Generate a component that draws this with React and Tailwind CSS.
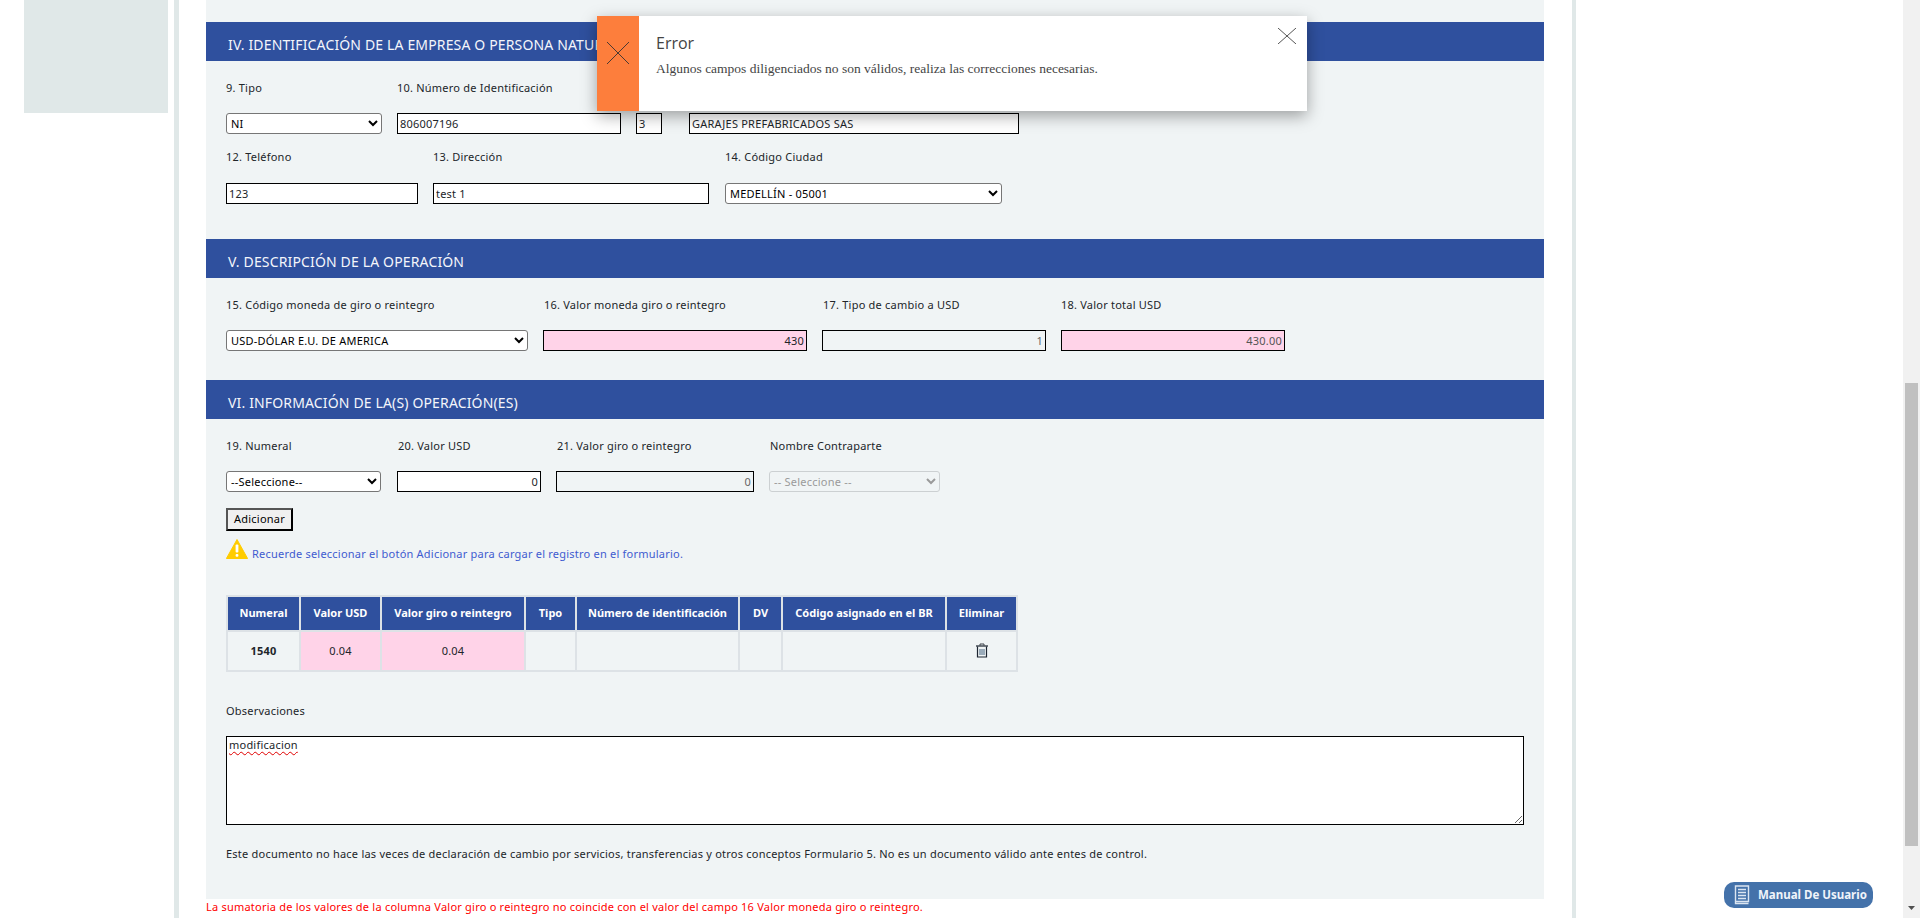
import React from "react";

const label = "text-[11px] leading-[14px] tracking-[0.22px] text-[#212529] whitespace-nowrap";
const inputBase = "h-[21px] border border-black border-solid px-[2px] pb-[1px] text-[11px] tracking-[0.22px] text-[#212529] outline-none";
const sel = "h-[21px] border border-[#767676] rounded-[3px] bg-white text-[11px] tracking-[0.22px] text-black px-0";

function SectionHeader({ children, className = "" }) {
  return (
    <div className={`h-[39px] bg-[#2f509e] pl-[22px] pt-[6px] flex items-center text-[14px] tracking-[0.15px] text-[#f4f6fb] whitespace-nowrap ${className}`}>
      {children}
    </div>
  );
}

const cols = [
  ["Numeral", 73],
  ["Valor USD", 81],
  ["Valor giro o reintegro", 144],
  ["Tipo", 51],
  ["Número de identificación", 163],
  ["DV", 43],
  ["Código asignado en el BR", 164],
  ["Eliminar", 71],
];

function TrashIcon() {
  return (
    <svg width="14" height="15" viewBox="0 0 14 15" fill="none" className="mx-auto -mt-[1px]">
      <path d="M5 2.5V1h4v1.5" stroke="#3a4048" strokeWidth="1" />
      <path d="M1 3h12" stroke="#1c2430" strokeWidth="1.2" />
      <path d="M2.5 3.5V14h9V3.5" stroke="#1c2430" strokeWidth="1.2" />
      <path d="M5 6v6M7 6v6M9 6v6" stroke="#44627f" strokeWidth="1" />
    </svg>
  );
}

export default function App() {
  return (
    <div className="relative h-[918px] w-[1920px] overflow-hidden flex bg-white font-['Noto_Sans','Liberation_Sans',sans-serif]">
      {/* left column */}
      <div className="w-[174px] pl-[24px] shrink-0">
        <div className="w-[144px] h-[113px] bg-[#e0e8e8]" />
      </div>
      <div className="w-[5px] bg-[#e0e8e8] shrink-0" />
      <div className="w-[27px] shrink-0" />

      {/* centre */}
      <div className="w-[1338px] shrink-0">
        <div className="h-[899px] bg-[#f0f4f5] pt-[22px]">
          <SectionHeader>IV. IDENTIFICACIÓN DE LA EMPRESA O PERSONA NATURAL</SectionHeader>
          <div className="pl-[20px]">
            <div className="flex h-[52px] pt-[20px]">
              <div className={`${label} w-[171px]`}>9. Tipo</div>
              <div className={label}>10. Número de Identificación</div>
            </div>
            <div className="flex">
              <select className={`${sel} w-[156px] mr-[15px]`} defaultValue="NI"><option>NI</option></select>
              <input readOnly value="806007196" className={`${inputBase} w-[224px] mr-[15px] bg-white`} />
              <input readOnly value="3" className={`${inputBase} w-[26px] mr-[27px] bg-white`} />
              <input readOnly value="GARAJES PREFABRICADOS SAS" className={`${inputBase} w-[330px] bg-white`} />
            </div>
            <div className="flex h-[49px] pt-[16px]">
              <div className={`${label} w-[207px]`}>12. Teléfono</div>
              <div className={`${label} w-[292px]`}>13. Dirección</div>
              <div className={label}>14. Código Ciudad</div>
            </div>
            <div className="flex">
              <input readOnly value="123" className={`${inputBase} h-[20px] w-[192px] mr-[15px] bg-white`} />
              <input readOnly value="test 1" className={`${inputBase} h-[20px] w-[276px] mr-[16px] bg-white`} />
              <select className={`${sel} w-[277px]`}><option>MEDELLÍN - 05001</option></select>
            </div>
          </div>

          <SectionHeader className="mt-[35px]">V. DESCRIPCIÓN DE LA OPERACIÓN</SectionHeader>
          <div className="pl-[20px]">
            <div className="flex h-[52px] pt-[20px]">
              <div className={`${label} w-[318px]`}>15. Código moneda de giro o reintegro</div>
              <div className={`${label} w-[279px]`}>16. Valor moneda giro o reintegro</div>
              <div className={`${label} w-[238px]`}>17. Tipo de cambio a USD</div>
              <div className={label}>18. Valor total USD</div>
            </div>
            <div className="flex">
              <select className={`${sel} w-[302px] mr-[15px]`}><option>USD-DÓLAR E.U. DE AMERICA</option></select>
              <input readOnly value="430" className={`${inputBase} h-[20px] w-[264px] mr-[15px] bg-[#ffd3e8] text-right`} />
              <input readOnly value="1" className={`${inputBase} h-[20px] w-[224px] mr-[15px] bg-[#f0f4f5] text-right !text-[#666]`} />
              <input readOnly value="430.00" className={`${inputBase} h-[20px] w-[224px] bg-[#ffd3e8] text-right !text-[#555]`} />
            </div>
          </div>

          <SectionHeader className="mt-[29px]">VI. INFORMACIÓN DE LA(S) OPERACIÓN(ES)</SectionHeader>
          <div className="pl-[20px]">
            <div className="flex h-[52px] pt-[20px]">
              <div className={`${label} w-[172px]`}>19. Numeral</div>
              <div className={`${label} w-[159px]`}>20. Valor USD</div>
              <div className={`${label} w-[213px]`}>21. Valor giro o reintegro</div>
              <div className={label}>Nombre Contraparte</div>
            </div>
            <div className="flex">
              <select className={`${sel} w-[155px] mr-[16px]`}><option>--Seleccione--</option></select>
              <input readOnly value="0" className={`${inputBase} w-[144px] mr-[15px] bg-white text-right`} />
              <input readOnly value="0" className={`${inputBase} w-[198px] mr-[15px] bg-[#f0f4f5] text-right !text-[#666]`} />
              <select disabled className={`${sel} w-[171px] !border-[#ccd0d2] !bg-[#f0f4f5] !text-[#9a9a9a]`}><option>-- Seleccione --</option></select>
            </div>
            <button className="block mt-[16px] w-[67px] h-[23px] pb-[1px] border-2 border-t-[#555] border-l-[#555] border-r-black border-b-black bg-[#f0f0f0] text-[11px] tracking-[0.22px] text-black">Adicionar</button>
            <div className="flex items-end h-[20px] mt-[8px]">
              <svg width="22" height="20" viewBox="0 0 22 20" className="shrink-0">
                <path d="M11 0.5 L21.6 19.5 L0.4 19.5 Z" fill="#ffcc00" stroke="#ffcc00" strokeLinejoin="round" />
                <rect x="9.6" y="5.5" width="2.8" height="8" rx="1" fill="#fff" />
                <rect x="9.6" y="15" width="2.8" height="2.8" rx="1" fill="#fff" />
              </svg>
              <span className="ml-[4px] -mb-[2px] text-[11px] leading-[14px] tracking-[0.22px] text-[#3f5bd0] whitespace-nowrap">Recuerde seleccionar el botón Adicionar para cargar el registro en el formulario.</span>
            </div>

            <table className="mt-[36px] border-collapse table-fixed w-[790px] border-2 border-[#dde2e6]">
              <thead>
                <tr>
                  {cols.map(([c, w]) => (
                    <th key={c} style={{ width: w }} className="h-[35px] p-0 pb-[1px] bg-[#2f509e] border-2 border-[#dde2e6] text-[11px] font-bold text-white whitespace-nowrap">{c}</th>
                  ))}
                </tr>
              </thead>
              <tbody>
                <tr className="h-[40px] text-[11px] text-[#212529] text-center tracking-[0.22px]">
                  <td className="p-0 border-2 border-[#dde2e6] font-bold">1540</td>
                  <td className="p-0 border-2 border-[#dde2e6] bg-[#ffd3e8]">0.04</td>
                  <td className="p-0 border-2 border-[#dde2e6] bg-[#ffd3e8]">0.04</td>
                  <td className="p-0 border-2 border-[#dde2e6]"></td>
                  <td className="p-0 border-2 border-[#dde2e6]"></td>
                  <td className="p-0 border-2 border-[#dde2e6]"></td>
                  <td className="p-0 border-2 border-[#dde2e6]"></td>
                  <td className="p-0 border-2 border-[#dde2e6]"><TrashIcon /></td>
                </tr>
              </tbody>
            </table>

            <div className={`${label} mt-[32px]`}>Observaciones</div>
            <div className="relative mt-[18px] w-[1298px] h-[89px]">
              <textarea readOnly spellCheck={false} value="modificacion" className="block w-full h-full border border-black bg-white px-[2px] py-[1px] text-[11px] tracking-[0.22px] leading-[14px] text-[#212529] outline-none resize" />
              <span className="absolute left-[3px] top-[2px] text-[11px] leading-[14px] tracking-[0.22px] text-transparent underline decoration-wavy decoration-[#e00000] decoration-1 underline-offset-[2px] pointer-events-none">modificacion</span>
            </div>
            <div className={`${label} mt-[22px]`}>Este documento no hace las veces de declaración de cambio por servicios, transferencias y otros conceptos Formulario 5. No es un documento válido ante entes de control.</div>
          </div>
        </div>
        <div className="pt-[1px] text-[11px] leading-[14px] tracking-[0.22px] text-[#ff0000] whitespace-nowrap">La sumatoria de los valores de la columna Valor giro o reintegro no coincide con el valor del campo 16 Valor moneda giro o reintegro.</div>
      </div>

      <div className="w-[28px] shrink-0" />
      <div className="w-[4px] bg-[#e0e8e8] shrink-0" />
      <div className="flex-1" />

      {/* scrollbar */}
      <div className="w-[17px] shrink-0 bg-[#f1f1f1] pt-[383px] pl-[2px] flex flex-col">
        <div className="w-[13px] h-[463px] bg-[#c0c0c0]" />
        <svg width="13" height="8" viewBox="0 0 13 8" className="mt-[59px]"><path d="M3 1h7L6.5 5z" fill="#505050" /></svg>
      </div>

      {/* floating manual button */}
      <div className="absolute left-[1724px] top-[882px] w-[149px] h-[26px] rounded-[10px] bg-[#4472aa] flex items-center pl-[10px] gap-[8px] text-[#f0f4fa] text-[11.5px] font-bold whitespace-nowrap">
        <svg width="16" height="20" viewBox="0 0 16 20" fill="none" stroke="#dbe5f1" strokeWidth="1.4">
          <path d="M1.5 16.5V1h13v15.5h-13v2h13" />
          <path d="M4 4.5h8M4 7.5h8M4 10.5h8M4 13.5h8" strokeWidth="1.6" />
        </svg>
        <span>Manual De Usuario</span>
      </div>

      {/* toast */}
      <div className="absolute left-[597px] top-[16px] w-[710px] h-[95px] bg-white flex shadow-[0_5px_15px_rgba(0,0,0,0.35)]">
        <div className="w-[42px] bg-[#fd7e3c] flex items-center justify-center pb-[22px] shrink-0">
          <svg width="22" height="22" viewBox="0 0 22 22" stroke="#4a3a33" strokeWidth="1"><path d="M0 0L22 22M22 0L0 22" /></svg>
        </div>
        <div className="pl-[17px] pt-[17px] flex-1">
          <div className="text-[16px] leading-[20px] text-[#444] font-['Open_Sans',sans-serif]">Error</div>
          <div className="mt-[7px] text-[13.5px] leading-[18px] text-[#444] font-['Liberation_Serif',serif] whitespace-nowrap">Algunos campos diligenciados no son válidos, realiza las correcciones necesarias.</div>
        </div>
        <svg width="18" height="16" viewBox="0 0 18 16" stroke="#555" strokeWidth="1" className="mt-[12px] mr-[11px] shrink-0"><path d="M0 0L18 16M18 0L0 16" /></svg>
      </div>
    </div>
  );
}
